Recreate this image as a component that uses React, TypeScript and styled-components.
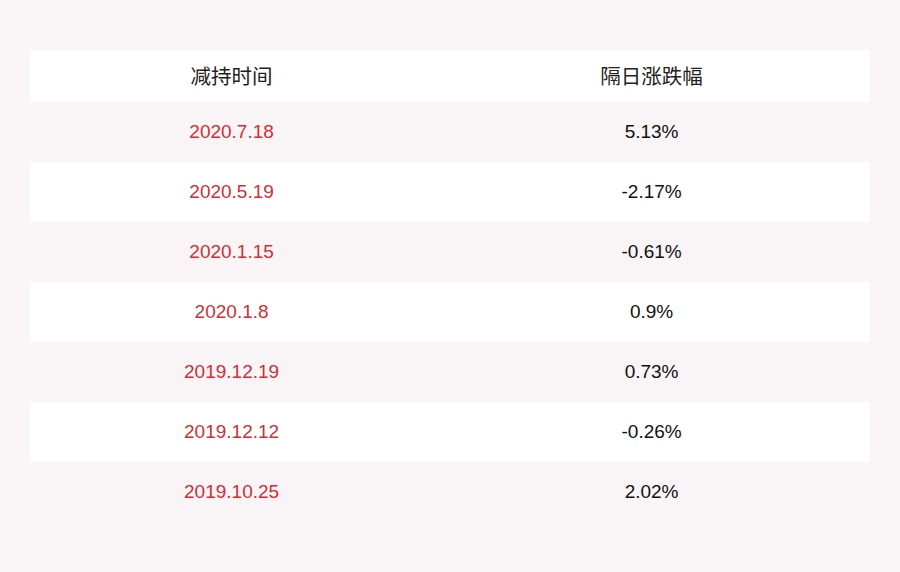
import styled, { createGlobalStyle } from "styled-components";

const rows = [
  { date: "2020.7.18", change: "5.13%" },
  { date: "2020.5.19", change: "-2.17%" },
  { date: "2020.1.15", change: "-0.61%" },
  { date: "2020.1.8", change: "0.9%" },
  { date: "2019.12.19", change: "0.73%" },
  { date: "2019.12.12", change: "-0.26%" },
  { date: "2019.10.25", change: "2.02%" },
];

const GlobalStyle = createGlobalStyle`
  body {
    margin: 0;
    background: #f9f4f5;
    font-family: "Liberation Sans", Arial, "Noto Sans CJK SC", sans-serif;
  }
`;

const Page = styled.div`
  width: 900px;
  height: 572px;
  padding: 50px 30px 0;
  box-sizing: border-box;
`;

const Table = styled.div`
  display: flex;
  flex-direction: column;
`;

interface IRow {
  striped?: boolean;
}

const Row = styled.div<IRow>`
  display: grid;
  grid-template-columns: 48% 52%;
  height: 60px;
  align-items: center;
  background: ${(props) => (props.striped ? "#ffffff" : "transparent")};
`;

const HeaderRow = styled(Row)`
  height: 52px;
  padding-bottom: 3px;
  box-sizing: border-box;
  background: #ffffff;
`;

const HeadCell = styled.div`
  text-align: center;
  font-size: 20.5px;
  color: #222222;
  font-family: "Noto Sans CJK SC", sans-serif;
`;

const DateCell = styled.div`
  text-align: center;
  font-size: 19px;
  color: #cf2f38;
`;

const ValueCell = styled.div`
  text-align: center;
  font-size: 19px;
  color: #111111;
`;

export default function App() {
  return (
    <>
      <GlobalStyle />
      <Page>
        <Table>
          <HeaderRow>
            <HeadCell>减持时间</HeadCell>
            <HeadCell>隔日涨跌幅</HeadCell>
          </HeaderRow>
          {rows.map((r, i) => (
            <Row key={r.date} striped={i % 2 === 1}>
              <DateCell>{r.date}</DateCell>
              <ValueCell>{r.change}</ValueCell>
            </Row>
          ))}
        </Table>
      </Page>
    </>
  );
}
